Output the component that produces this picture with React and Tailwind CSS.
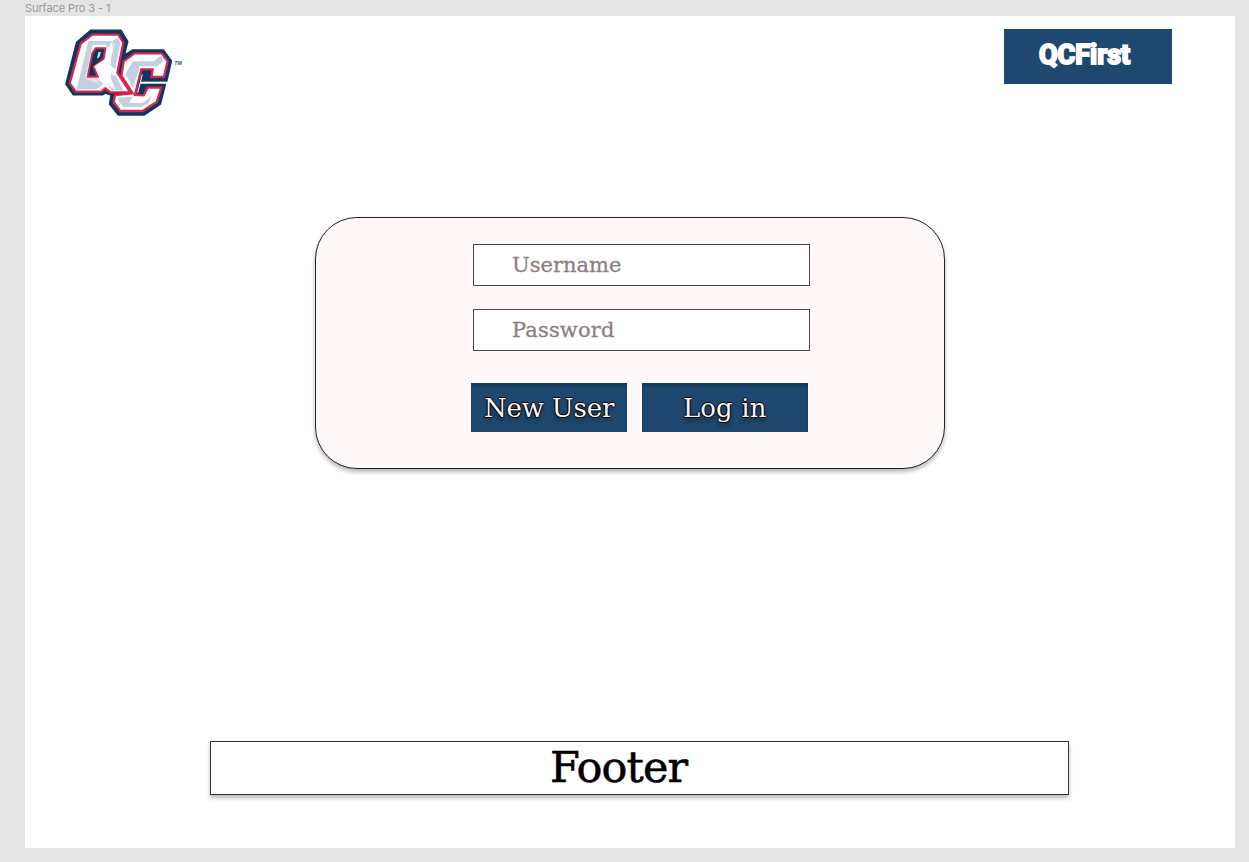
function Logo() {
  return (
    <svg className="h-[96px] w-[130px]" viewBox="0 0 390 288" role="img" aria-label="QC logo">
      <path d="M92 19H183L203 52L193 94L219 78H310L334 111L320 171H240L237 181H316L301 240L252 273H175L149 240L153 213L136 207L127 212H40L18 180L50 55Z" fill="#0b3764" stroke="#0b3764" strokeWidth="5" strokeLinejoin="round" />
      <path d="M223 88H305L323 112L312 159H274L278 136H244L225 213L251 214L263 191H304L290 234L248 261H181L161 235L165 213L218 208L184 155L191 112Z" fill="#fff" stroke="#dc2348" strokeWidth="7" />
      <path d="M219 112H281L304 94L308 113L292 127H239L219 192L196 150Z" fill="#c3d0df" />
      <path d="M173 221L219 218L207 237H247L276 215L264 239L243 249H191L176 232Z" fill="#c3d0df" />
      <path d="M250 145H266L260 170H241L238 181H257L240 206H234Z" fill="#0b3764" />
      <path d="M247 151L233 207" stroke="#fff" strokeWidth="3" />
      <path d="M240 176H319" stroke="#fff" strokeWidth="5" />
      <path d="M97 32H175L190 56L172 146L211 205H151L136 193L124 203H47L29 178L62 59Z" fill="#fff" stroke="#dc2348" strokeWidth="7" />
      <path d="M85 51H158L145 71L135 62H98L76 162H109L130 179L111 196H50Z" fill="#c3d0df" />
      <path d="M158 51L173 40L181 58L165 137L151 122L153 92Z" fill="#c3d0df" />
      <path d="M151 147L168 156L190 199H157L137 180Z" fill="#c3d0df" />
      <path d="M72 163H107L124 186L107 176Z" fill="#fff" opacity=".4" />
      <path d="M107 73H136L131 104L101 129L113 158H83L97 88Z" fill="#0b3764" stroke="#dc2348" strokeWidth="6" />
      <path d="M115 85L123 84L118 99L111 104Z" fill="#d8e0e9" />
      <path d="M102 127L132 108L165 55L151 111L153 163L166 198L136 178Z" fill="#fff" />
      <text x="343" y="123" fontSize="15" fontWeight="bold" fontStyle="italic" fontFamily="Liberation Sans, sans-serif" fill="#315c83" textLength="23" lengthAdjust="spacingAndGlyphs">TM</text>
    </svg>
  );
}

const serif = "font-['DejaVu_Serif',serif]";

function Field({ label, className }) {
  return (
    <div className={`flex h-[42px] w-[337px] items-center border border-[#4a4849] bg-white pl-[38px] ${serif}`}>
      <span className={`text-[21px] leading-none text-[#8b8080] [-webkit-text-stroke:0.3px_#8b8080] ${className}`}>{label}</span>
    </div>
  );
}

function Action({ label, className, textClass }) {
  return (
    <button className={`flex h-[49px] items-center whitespace-nowrap bg-[#1e486f] text-[26px] leading-none text-[#fff5f5] shadow-[inset_0_3px_3px_rgba(0,0,0,0.22)] ${serif} ${className}`}>
      <span className={`[text-shadow:-1px_0_#000,1px_0_#000,0_-1px_#000,0_1px_#000,0_4px_4px_rgba(0,0,0,0.4)] ${textClass}`}>{label}</span>
    </button>
  );
}

export default function App() {
  return (
    <div className="flex h-[862px] w-[1249px] flex-col overflow-hidden bg-[#e5e5e5] pl-[25px]">
      <div className="h-4 shrink-0 pt-[2px] font-['Inter',sans-serif] text-[11px] leading-[13px] tracking-[-0.09px] text-[#999]">Surface Pro 3 - 1</div>
      <main className="flex h-[832px] w-[1210px] shrink-0 flex-col bg-white">
        <header className="flex h-[201px] shrink-0 items-start justify-between pl-[35px] pr-[63px]">
          <div className="pt-2"><Logo /></div>
          <div className="mt-[13px] flex h-[55px] w-[168px] items-center bg-[#1e486f] pb-[3px] pl-[35px]">
            <span className="font-['Roboto',sans-serif] text-[27px] font-bold leading-none text-white [-webkit-text-stroke:2px_#fff]">QCFirst</span>
          </div>
        </header>
        <section className="ml-[290px] flex h-[252px] w-[630px] shrink-0 flex-col rounded-[42px] border border-[#222] bg-[#fef8f8] pl-[155px] pt-[26px] shadow-[0_3px_4px_rgba(0,0,0,0.28)]">
          <div className="flex flex-col gap-[23px] pl-[2px]">
            <Field label="Username" className="tracking-normal" />
            <Field label="Password" className="tracking-[0.15px]" />
          </div>
          <div className="mt-8 flex gap-[15px]">
            <Action label="New User" className="w-[156px] pl-[13px]" textClass="tracking-[-0.2px]" />
            <Action label="Log in" className="w-[166px] pl-[41px]" textClass="tracking-[0.1px]" />
          </div>
        </section>
        <footer className={`ml-[185px] mt-[272px] flex h-[54px] w-[859px] shrink-0 items-center border border-[#333] bg-white pb-[2px] pl-[339px] shadow-[0_3px_4px_rgba(0,0,0,0.28)] ${serif}`}>
          <span className="text-[43px] leading-none tracking-[-0.9px] text-black [-webkit-text-stroke:0.6px_#000]">Footer</span>
        </footer>
      </main>
    </div>
  );
}
